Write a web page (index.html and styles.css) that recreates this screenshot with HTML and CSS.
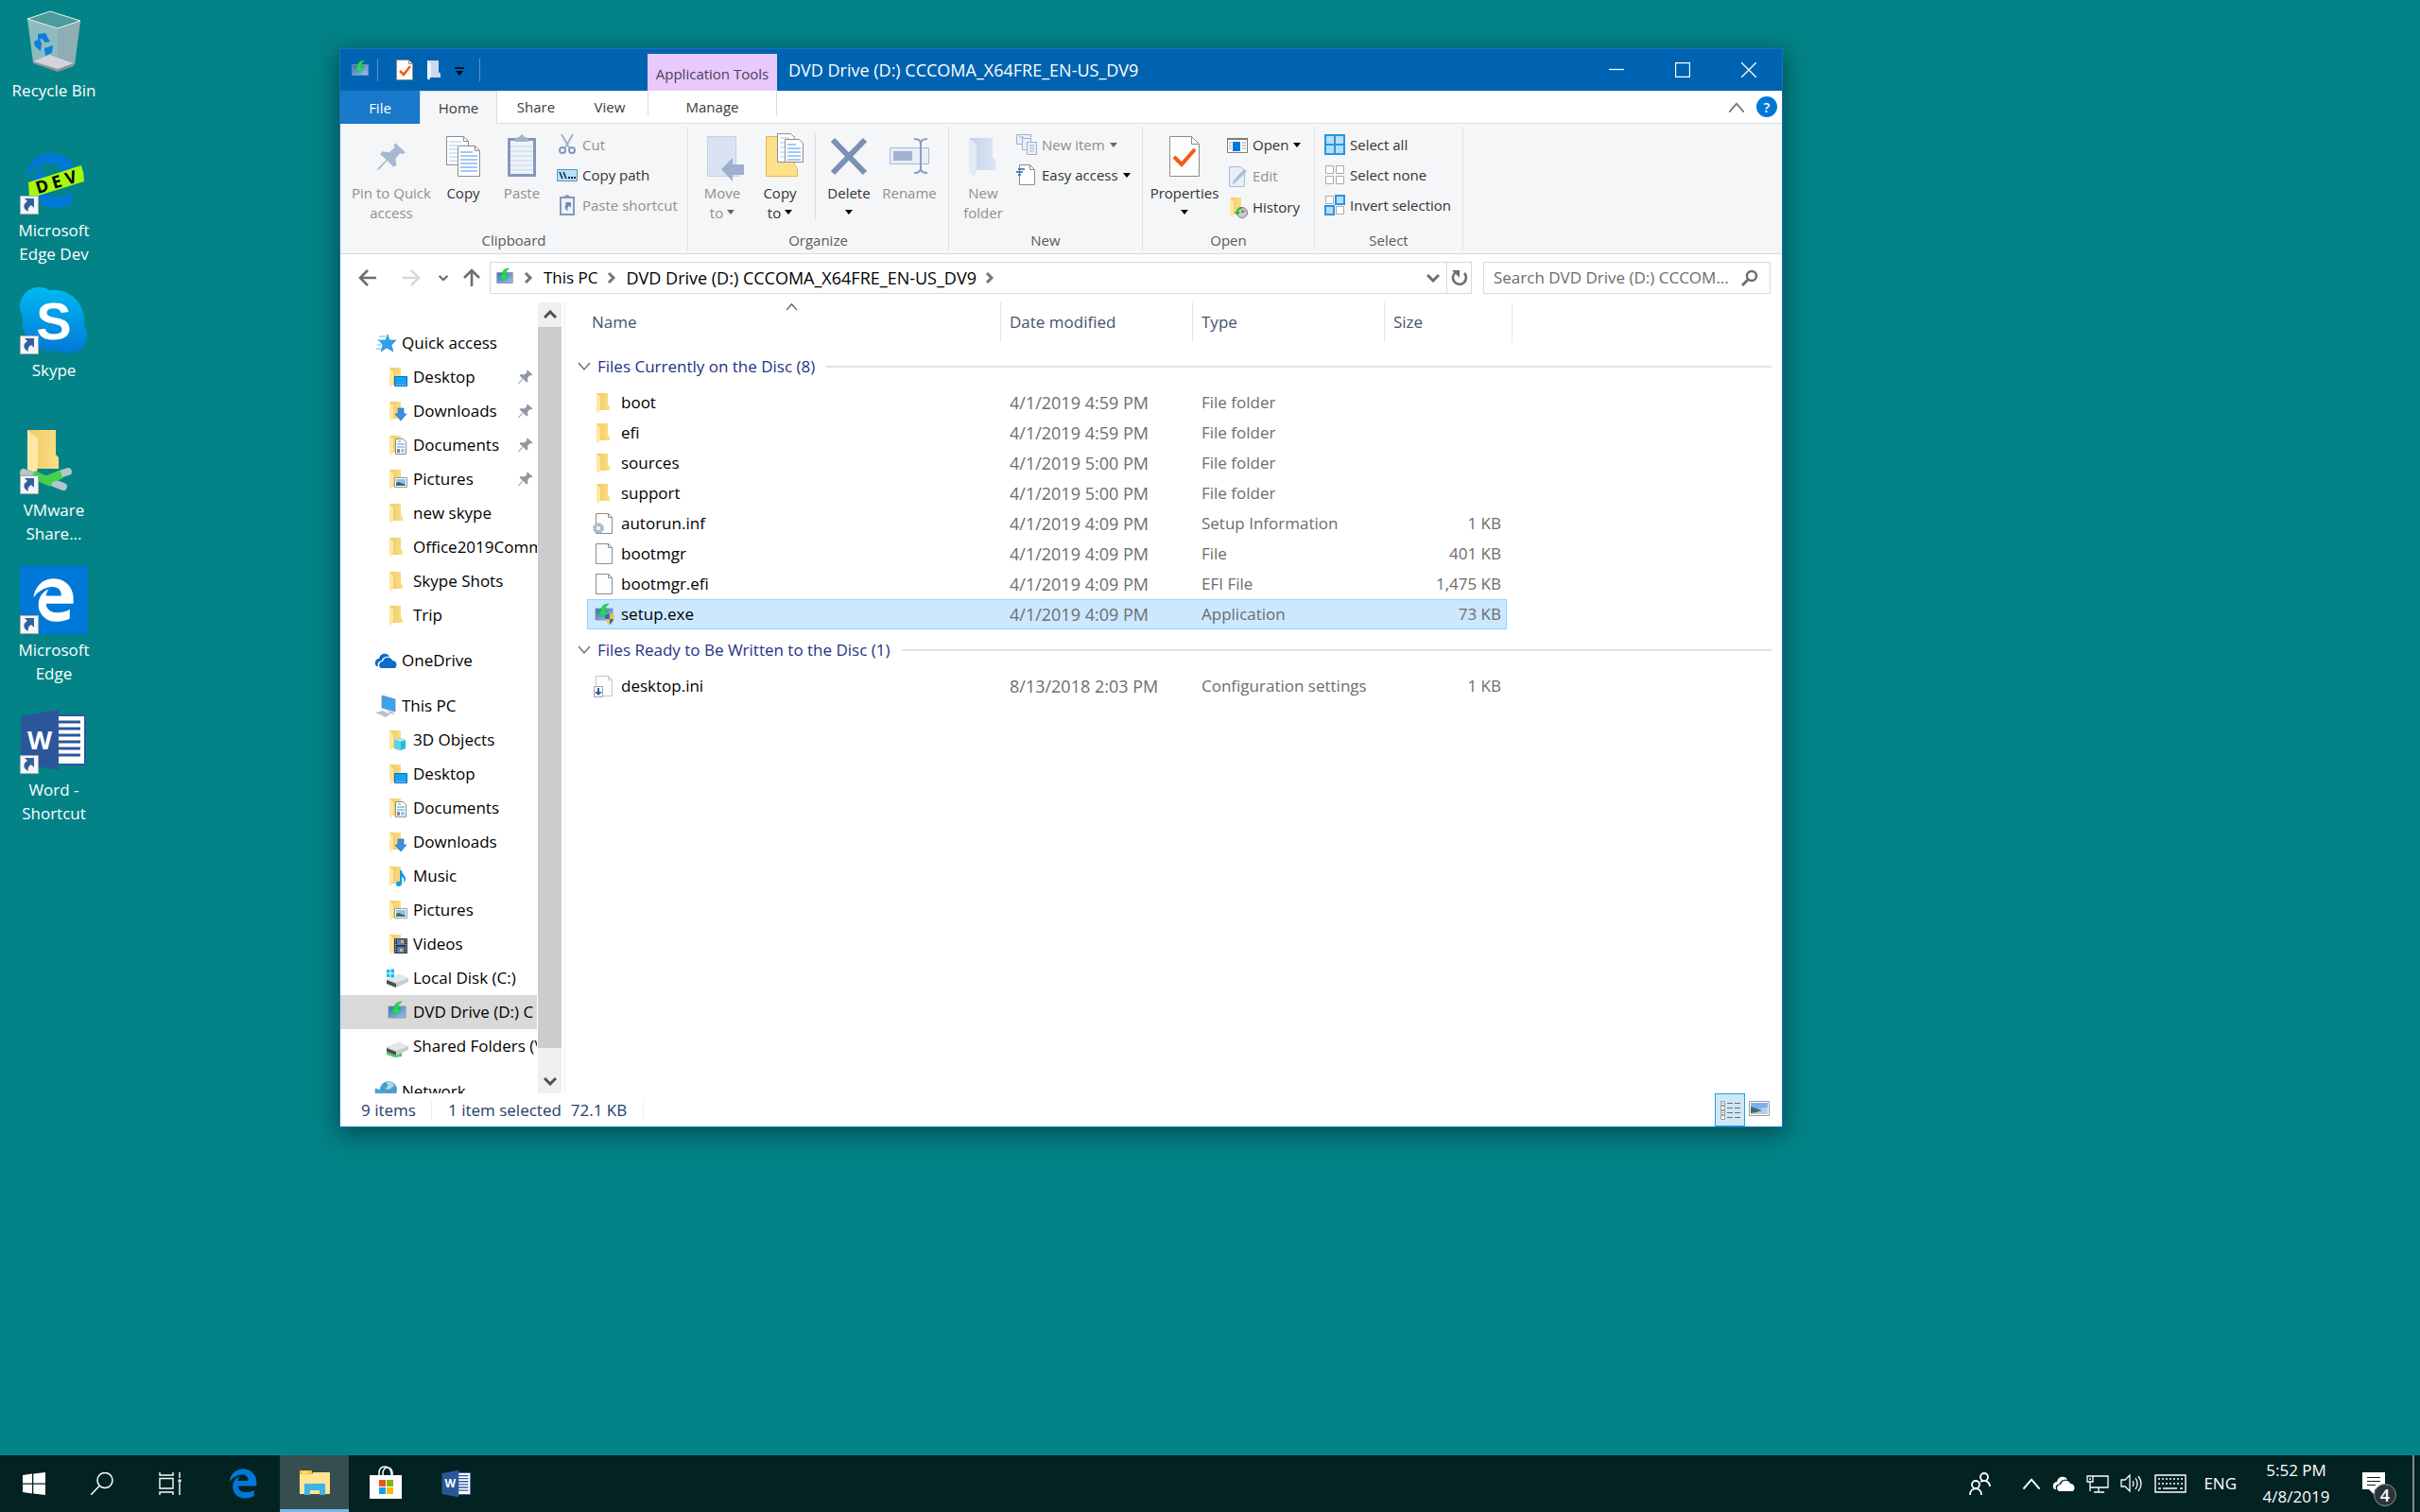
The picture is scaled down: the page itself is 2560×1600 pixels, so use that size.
FILE: index.html
```html
<!DOCTYPE html>
<html lang="en">
<head>
<meta charset="utf-8">
<meta name="viewport" content="width=device-width, initial-scale=1">
<title>DVD Drive (D:) CCCOMA_X64FRE_EN-US_DV9</title>
<link rel="stylesheet" href="styles.css">
</head>
<body>
<svg class="defs" width="0" height="0" aria-hidden="true">
  <defs>
    <linearGradient id="g-folder" x1="0" x2="1"><stop offset="0" stop-color="#eec767"/><stop offset="1" stop-color="#fddf85"/></linearGradient>
    <linearGradient id="g-skype" x1="0" y1="0" x2="0" y2="1"><stop offset="0" stop-color="#00b9f2"/><stop offset="1" stop-color="#0078d7"/></linearGradient>
    <linearGradient id="g-screen" x1="0" y1="0" x2="1" y2="1"><stop offset="0" stop-color="#3470b8"/><stop offset="1" stop-color="#9cc3ee"/></linearGradient>
    <linearGradient id="g-ghost" x1="0" x2="1"><stop offset="0" stop-color="#c3d2e9"/><stop offset="1" stop-color="#dce6f4"/></linearGradient>

    <symbol id="folder" viewBox="0 0 24 24"><path d="M4 2h12v12l2 2v4H7z" fill="url(#g-folder)"/><path d="M4 2l4 4v12l-2 5-2-2z" fill="#ffe8a3"/></symbol>
    <symbol id="shortcut" viewBox="0 0 20 20"><path d="M.5.5h19v19H.5z" fill="#f6f6f8" stroke="#a9adb1"/><path d="M5 3h10v10l-3-3c-3 2-4 4-3 7-6-3-6-8-1-11z" fill="#31619f"/></symbol>
    <symbol id="edge" viewBox="0 0 512 512"><path d="M486.286 243.671c0-44.032-7.754-84.465-28.801-122.405C416.498 47.879 343.912 8.001 258.893 8.001 118.962 7.724 40.617 113.214 26.056 227.679c42.429-61.312 117.073-121.376 220.375-124.966 0 0 109.666 0 99.419 104.957H169.997c6.369-37.386 18.554-58.986 34.339-78.926-75.048 34.893-121.85 96.096-120.742 188.315.83 71.448 50.124 144.836 120.743 171.976 83.357 31.847 192.776 7.2 240.132-21.324V363.307c-80.864 56.494-270.871 60.925-272.255-67.572h314.073v-52.064z" fill="currentColor"/></symbol>
    <symbol id="word" viewBox="0 0 72 66"><path d="M39 7h30v52H39z" fill="#fff" stroke="#2b579a" stroke-width="2"/><path d="M39 14h25M39 21h25M39 28h25M39 35h25M39 42h25M39 49h25" stroke="#2b579a" stroke-width="3"/><path d="M1 8l40-7v64L1 58z" fill="#2b579a"/><text x="21" y="43" text-anchor="middle" font-family="Open Sans, sans-serif" font-weight="700" font-size="27" fill="#fff">W</text></symbol>
    <symbol id="setup" viewBox="0 0 24 24"><path d="M3 6h18v12H3z" fill="url(#g-screen)" stroke="#8796a8"/><path d="M17 1c-5 0-8 2-8 8H6l5 6 5-6h-3c0-4 1-6 4-8z" fill="#1fe04d" stroke="#12a637" stroke-width=".5"/></symbol>
    <symbol id="pin" viewBox="0 0 32 32"><path d="M20 1l11 10-3 2-3-1-5 6 1 7-3 2-7-7-8 9-3 2 1-3 9-9-7-6 3-3 7 1 6-5-1-3z" fill="currentColor"/></symbol>
    <symbol id="page" viewBox="0 0 24 24"><path d="M3.500 1.500h13l4 4v17h-17z" fill="#fdfdfd" stroke="#8c8c8c"/><path d="M16.500 1.500v4h4" fill="none" stroke="#8c8c8c"/></symbol>
    <symbol id="f-desktop" viewBox="0 0 24 24"><use href="#folder"/><path d="M9.500 11.500h13v10h-13z" fill="#17a2f7" stroke="#0b72b8"/><path d="M11 20.500h10" stroke="#8ad4ff" stroke-dasharray="2 1"/></symbol>
    <symbol id="f-downloads" viewBox="0 0 24 24"><use href="#folder"/><path d="M13 9h6v6h3l-6 7-6-7h3z" fill="#3a92e0" stroke="#256fb4" stroke-width=".7"/></symbol>
    <symbol id="f-documents" viewBox="0 0 24 24"><use href="#folder"/><path d="M10.500 5.500h8l3 3v13h-11z" fill="#fff" stroke="#8a8a8a"/><path d="M13 8h3M12 11h8M12 14h8M16 17h4M16 19h4" stroke="#3f98cf"/><path d="M12 16h3v4h-3z" fill="#7a8794"/></symbol>
    <symbol id="f-pictures" viewBox="0 0 24 24"><use href="#folder"/><path d="M9.500 10.500h13v10h-13z" fill="#fff" stroke="#9a9a9a"/><path d="M11 12h10v7H11z" fill="#8cc3f2"/><path d="M11 16l3-1 7 3v1H11z" fill="#3f6b5c"/></symbol>
    <symbol id="f-3d" viewBox="0 0 24 24"><use href="#folder"/><path d="M9 12l7-2 5 2v9l-5 2-7-2z" fill="#2fb8d4"/><path d="M9 12l7-2 5 2-5 2z" fill="#a2ecf5"/><path d="M9 12l7 2v9l-7-2z" fill="#5ed3e6"/></symbol>
    <symbol id="f-music" viewBox="0 0 24 24"><use href="#folder"/><path d="M15 6h2c0 4 4 5 4 9 0 2-1 3-2 4 1-4 0-5-2-6v7c0 4-7 4-6 0 0-2 3-3 4-2z" fill="#149ce9"/></symbol>
    <symbol id="f-videos" viewBox="0 0 24 24"><use href="#folder"/><path d="M9 6h14v16H9z" fill="#3a3a3a"/><path d="M12 7h8v6h-8zM12 15h8v6h-8z" fill="#4a7fd4"/><path d="M16 8h3v3h-3zM15 17h3v3h-3z" fill="#f0b429"/><path d="M10.500 7v15M21.500 7v15" stroke="#e8e8e8" stroke-dasharray="1 1.500"/></symbol>
    <symbol id="disk" viewBox="0 0 24 24"><path d="M1 13l13-5 10 4v4l-13 6-10-4z" fill="#c9cbcd"/><path d="M1 13l13-5 10 4-13 5z" fill="#e4e6e8"/><path d="M1 14l10 4v4L1 18z" fill="#4b4f4e"/></symbol>
    <symbol id="d-local" viewBox="0 0 24 24"><use href="#disk"/><path d="M0 2h9v9H0z" fill="#fff"/><path d="M1 3h3.500v3.500H1zM5.500 2.500H9v4H5.500zM1 7.500h3.500V11H1zM5.500 7.500H9v4H5.500z" fill="#14bdf0"/></symbol>
    <symbol id="d-shared" viewBox="0 0 24 24"><use href="#disk"/><path d="M1 18l10 4 6-3v4l-7 1-9-3z" fill="#55c766"/></symbol>
    <symbol id="star" viewBox="0 0 24 24"><path d="M14 3l2 6h7l-5 5 2 7-7-4-6 4 2-7-4-5h7z" fill="#2ca1ee" stroke="#1d84cf" stroke-width=".6"/><path d="M5 5h7M3 9h4M3 14h4M2 18h5" stroke="#5cb8f2"/></symbol>
    <symbol id="cloud" viewBox="0 0 24 24"><path d="M2 18c-3-4 0-8 3-8 1-6 9-7 11-2-5-1-8 2-8 4-4 1-5 3-4 6z" fill="currentColor"/><path d="M7 20c-4-3-1-7 2-7 1-5 8-6 10-1 4-1 6 5 3 8z" fill="currentColor"/></symbol>
    <symbol id="pc" viewBox="0 0 24 24"><path d="M8 1l14 4v13L8 14z" fill="#36a5ee" stroke="#7b8a98" stroke-width=".8"/><path d="M13 17l6 1 3 3-6-1zM1 19l8-2 8 4-5 3z" fill="#b9c2ca"/></symbol>
    <symbol id="network" viewBox="0 0 24 24"><circle cx="15" cy="10" r="9" fill="#4f9cc8"/><path d="M12 3c4 1 2 5-1 6 4 2 8 0 10-4-2-4-7-5-9-2z" fill="#a9d8ea"/><path d="M1 9l12 3v12H1z" fill="#3aa8ec" stroke="#6d90a8" stroke-width=".6"/></symbol>
    <symbol id="file-inf" viewBox="0 0 24 24"><use href="#page"/><circle cx="6" cy="17" r="4" fill="#eef2f5" stroke="#9fb0bd" stroke-width="3.500" stroke-dasharray="2.500 .6"/></symbol>
    <symbol id="file-ini" viewBox="0 0 24 24"><g opacity=".5"><use href="#page"/></g><path d="M1.500 12.500h9v11h-9z" fill="#fff" stroke="#9aa3ab"/><path d="M5 14h2v4h3l-4 4-4-4h3z" fill="#2e5c9a"/></symbol>
    <symbol id="file-setup" viewBox="0 0 24 24"><use href="#setup"/><path d="M13 13l5-2 5 2c0 5-2 8-5 10-3-2-5-5-5-10z" fill="#f5c02c"/><path d="M18 11v6h-5c0-1 0-3 0-4zM18 17h4c-1 3-2 4-4 6z" fill="#2d6cc0"/></symbol>
    <symbol id="chev-right" viewBox="0 0 10 14"><path d="M2 2l5 5-5 5" fill="none" stroke="currentColor" stroke-width="3"/></symbol>
    <symbol id="chev-down" viewBox="0 0 14 10"><path d="M1 2l6 6 6-6" fill="none" stroke="currentColor" stroke-width="3"/></symbol>
    <symbol id="thin-down" viewBox="0 0 14 10"><path d="M1 1l6 7 6-7" fill="none" stroke="currentColor" stroke-width="1.400"/></symbol>
    <symbol id="thin-up" viewBox="0 0 14 10"><path d="M1 9l6-7 6 7" fill="none" stroke="currentColor" stroke-width="1.400"/></symbol>
    <symbol id="arrow-left" viewBox="0 0 20 20"><path d="M19 10H2M10 2l-8 8 8 8" fill="none" stroke="currentColor" stroke-width="2.600"/></symbol>
  </defs>
</svg>

<main class="desktop">
  <nav class="shortcuts" aria-label="Desktop shortcuts">
    <a class="shortcut" href="#"><span class="tile"><svg viewBox="0 0 72 72"><path d="M8 13l24-8 32 10-6 46-18 7-26-9z" fill="#b9d0d3" opacity=".75"/><path d="M8 13l24-8 32 10-24 8z" fill="#4f9a9b"/><path d="M40 23l24-8-7 47-17 5z" fill="#8fa9b0" opacity=".8"/><path d="M14 58l17-7 26 9-17 7z" fill="#d6d3d8"/><path d="M14 58l26 8 17-6v3l-17 6-26-9z" fill="#8d9498"/><path d="M8 13l24-8 32 10-24 8z" fill="none" stroke="#e4efef"/><path d="M19 29l8-1 5 9-5 1-4-4-4 1zM15 37l6-3 2 5-1 8-6-5zM26 44l9-3-1 8-7 3z" fill="#0e7fd8"/></svg></span><span class="caption">Recycle Bin</span></a>
    <a class="shortcut" href="#"><span class="tile"><svg viewBox="0 0 72 72"><svg x="3" y="2" width="60" height="68" color="#0078d7"><use href="#edge"/></svg><path d="M9 38l56-18q3 8 3 17l-58 18z" fill="#a6f80c"/><text x="39" y="44" transform="rotate(-17 39 40)" text-anchor="middle" font-family="Open Sans, sans-serif" font-weight="700" font-size="18" fill="#000">D E V</text></svg><svg class="overlay"><use href="#shortcut"/></svg></span><span class="caption">Microsoft<br>Edge Dev</span></a>
    <a class="shortcut" href="#"><span class="tile"><svg viewBox="0 0 72 72"><g fill="url(#g-skype)"><path d="M20 1c5 0 8 1 11 3 22-3 40 15 37 37 8 13-1 30-16 30-4 0-8-1-11-3C17 71 0 54 3 32-5 19 4 1 20 1z"/></g><text x="36" y="56" text-anchor="middle" font-family="Liberation Sans, sans-serif" font-weight="700" font-size="56" fill="#fff">S</text></svg><svg class="overlay"><use href="#shortcut"/></svg></span><span class="caption">Skype</span></a>
    <a class="shortcut" href="#"><span class="tile"><svg viewBox="0 0 72 72"><path d="M8 4h30v26l3 3v12H12z" fill="url(#g-folder)"/><path d="M8 4l11 9v25l-1 12-10-4z" fill="#ffe8a3"/><path d="M4 49l10 4M36 60l10 4M42 51l9-3" stroke="#b4c6c6" stroke-width="8" stroke-linecap="round"/><path d="M14 51l20 9M28 57l16-6" stroke="#45d04a" stroke-width="9"/></svg><svg class="overlay"><use href="#shortcut"/></svg></span><span class="caption">VMware<br>Share...</span></a>
    <a class="shortcut" href="#"><span class="tile"><svg viewBox="0 0 72 72"><path d="M0 0h72v72H0z" fill="#0078d7"/><svg x="12" y="12" width="47" height="48" color="#fff"><use href="#edge"/></svg></svg><svg class="overlay"><use href="#shortcut"/></svg></span><span class="caption">Microsoft<br>Edge</span></a>
    <a class="shortcut" href="#"><span class="tile"><svg viewBox="0 0 72 72"><svg y="3" width="72" height="66"><use href="#word"/></svg></svg><svg class="overlay"><use href="#shortcut"/></svg></span><span class="caption">Word -<br>Shortcut</span></a>
  </nav>

  <section class="window" aria-label="File Explorer">
    <header class="titlebar">
      <div class="quick">
        <svg class="i22"><use href="#setup"/></svg><i class="vsep"></i>
        <button aria-label="Properties"><svg class="i24" viewBox="0 0 24 24"><use href="#page"/><path d="M7 13l4 4 7-9" fill="none" stroke="#f25c12" stroke-width="2.500"/></svg></button>
        <button aria-label="New folder"><svg class="i24" viewBox="0 0 24 24"><path d="M4 2h12v12l2 2v4H7z" fill="#c9d9f0"/><path d="M4 2l4 4v12l-2 5-2-2z" fill="#eef4fc"/></svg></button>
        <button aria-label="Customize"><svg class="i10" viewBox="0 0 10 10"><path d="M0 1h10" stroke="#000" stroke-width="1.500"/><path d="M1 4h8L5 9z"/></svg></button>
        <i class="vsep"></i>
      </div>
      <div class="context-title">Application Tools</div>
      <h1>DVD Drive (D:) CCCOMA_X64FRE_EN-US_DV9</h1>
      <div class="controls">
        <button aria-label="Minimize"><svg class="i16" viewBox="0 0 16 16"><path d="M0 7.500h16"/></svg></button>
        <button aria-label="Maximize"><svg class="i16" viewBox="0 0 16 16"><path d="M.5.5h15v15H.5z"/></svg></button>
        <button aria-label="Close"><svg class="i16" viewBox="0 0 16 16"><path d="M0 0l16 16M16 0L0 16"/></svg></button>
      </div>
    </header>

    <div class="tabs">
      <button class="tab file">File</button><button class="tab home">Home</button><button class="tab">Share</button><button class="tab view">View</button><button class="tab manage">Manage</button>
      <span class="grow"></span>
      <button class="collapse" aria-label="Collapse ribbon"><svg viewBox="0 0 14 10"><use href="#thin-up"/></svg></button>
      <button class="help" aria-label="Help">?</button>
    </div>

    <div class="ribbon">
      <section class="group g-clipboard">
        <div class="tools">
          <button class="big w96" disabled><svg viewBox="0 0 44 48" color="#a9b8d2"><svg x="7" y="8" width="31" height="34"><use href="#pin"/></svg></svg><span>Pin to Quick<br>access</span></button>
          <button class="big w56"><svg viewBox="0 0 44 48"><g fill="#fff" stroke="#8c8c8c"><path d="M4.500 3.500h18l5 5v25h-23z"/><path d="M16.500 13.500h18l5 5v27h-23z"/></g><path d="M22.500 3.500v5h5M34.500 13.500v5h5" fill="none" stroke="#8c8c8c"/><path d="M7 9h13M7 13h17M7 17h9M7 21h9M7 25h9M7 29h9" stroke="#a8c6ee"/><path d="M19 20h13M19 24h18M19 28h18M19 32h18M19 36h18M19 40h18" stroke="#4a93ea"/></svg><span>Copy</span></button>
          <button class="big w68" disabled><svg viewBox="0 0 44 48"><path d="M8.500 6.500h27v38h-27z" fill="#eef3fb" stroke="#8598ba" stroke-width="3"/><path d="M10 14h24M10 19h24M10 24h24M10 29h24M10 34h24M10 39h24" stroke="#c9d5ea"/><path d="M15 9V5l4-1 3-3 3 3 4 1v4z" fill="#a3b2cd"/></svg><span>Paste</span></button>
          <div class="stack">
            <button disabled><svg class="i22" viewBox="0 0 22 22"><path d="M5 0l8 14M17 0L9 14" stroke="#a3b2cd" stroke-width="2"/><circle cx="6" cy="17" r="3" fill="none" stroke="#8598ba" stroke-width="2"/><circle cx="16" cy="17" r="3" fill="none" stroke="#8598ba" stroke-width="2"/></svg>Cut</button>
            <button><svg class="i22" viewBox="0 0 22 22"><path d="M.5 5.500h21v12H.5z" fill="#b5e0fb" stroke="#5b93ba"/><path d="M3 8l3 7M7 8l3 7" stroke="#123" stroke-width="1.500"/><path d="M12 14h8" stroke="#123" stroke-width="2" stroke-dasharray="2 1"/></svg>Copy path</button>
            <button disabled><svg class="i22" viewBox="0 0 22 22"><path d="M4 3h14v18H4z" fill="#eef3fb" stroke="#8598ba" stroke-width="2"/><path d="M7 4V2l4-2 4 2v2z" fill="#8598ba"/><path d="M9 8h6v6l-2-2c-2 1-2 3-1 5-4-1-4-5-2-7z" fill="#7388ae"/></svg>Paste shortcut</button>
          </div>
        </div>
        <h2>Clipboard</h2>
      </section>
      <section class="group g-organize">
        <div class="tools">
          <button class="big w66" disabled><svg viewBox="0 0 44 48"><path d="M6.500 3.500h30v30l3 4v8h-33z" fill="#d9e3f3" stroke="#c3d0e6"/><path d="M21 38l12-12v7h12v11H33v7z" fill="#9fb0cc"/></svg><span>Move<br>to <i class="caret"></i></span></button>
          <button class="big w56"><svg viewBox="-7 0 44 48"><path d="M.5 3.500h30v30l3 4v8H.5z" fill="#fce08a" stroke="#e3b94c"/><g fill="#fff" stroke="#8c8c8c"><path d="M12.500.5h14l4 4v26h-18z"/><path d="M20.500 6.500h15l4 4v20h-19z"/></g><path d="M15 5h10M15 10h5M15 15h5M15 20h5M15 25h5" stroke="#a8c6ee"/><path d="M23 12h9M23 16h14M23 20h14M23 24h14M23 28h14" stroke="#4a93ea"/></svg><span>Copy<br>to <i class="caret"></i></span></button>
          <i class="rsep"></i>
          <button class="big w60"><svg viewBox="0 0 44 48"><path d="M5 7l34 35M39 7L5 42" stroke="#7c8fb4" stroke-width="6"/></svg><span>Delete<br><i class="caret"></i></span></button>
          <button class="big w68" disabled><svg viewBox="0 0 44 48"><path d="M1.500 15.500h41v17h-41z" fill="#e6eefa" stroke="#a9bad6"/><path d="M5 19h20v10H5z" fill="#a3b2cd"/><path d="M27 6q7 0 7 5v26q0 5-7 5M41 6q-7 0-7 5v26q0 5 7 5" fill="none" stroke="#8a9cbd" stroke-width="2"/></svg><span>Rename</span></button>
        </div>
        <h2>Organize</h2>
      </section>
      <section class="group g-new">
        <div class="tools">
          <button class="big w64" disabled><svg viewBox="0 0 44 48"><path d="M7 5h25v20l3 3v11H12z" fill="url(#g-ghost)"/><path d="M7 5l8 7v25l-2 9-6-5z" fill="#e3ebf7"/></svg><span>New<br>folder</span></button>
          <div class="stack">
            <button disabled><svg class="i22" viewBox="0 0 22 22"><g fill="#eaf0fa" stroke="#9fb0cc"><path d="M.5.5h15v10H.5z"/><path d="M6.500 4.500h9v12h-9z"/><path d="M11.500 8.500h10v13h-10z"/></g><path d="M14 12h5M14 15h5M14 18h5M3 3h5" stroke="#9fb0cc"/></svg>New item <i class="caret"></i></button>
            <button><svg class="i22" viewBox="0 0 22 22"><path d="M3.500.5h11l5 5v16h-16z" fill="#fff" stroke="#8c8c8c"/><path d="M14.500.5v5h5" fill="none" stroke="#8c8c8c"/><path d="M2 5h7M0 8h7M2 11h3" stroke="#1467b0" stroke-width="1.500"/></svg>Easy access <i class="caret"></i></button>
          </div>
        </div>
        <h2>New</h2>
      </section>
      <section class="group g-open">
        <div class="tools">
          <button class="big w84"><svg viewBox="0 0 44 48"><path d="M6.500 3.500h23l8 8v34h-31z" fill="#fdfdfd" stroke="#8c8c8c"/><path d="M29.500 3.500v8h8" fill="none" stroke="#8c8c8c"/><path d="M11 25l8 8 14-16" fill="none" stroke="#f25c12" stroke-width="4"/></svg><span>Properties<br><i class="caret"></i></span></button>
          <div class="stack tall">
            <button><svg class="i22" viewBox="0 0 22 22"><path d="M.5 3.500h21v15H.5z" fill="#fff" stroke="#7b7b7b"/><path d="M0 4h22" stroke="#7b7b7b" stroke-width="2"/><path d="M6 7h8v10H6z" fill="#0078d7"/><path d="M2 8h3M2 11h3M2 14h3M16 8h4M16 11h4M16 14h4" stroke="#999"/></svg>Open <i class="caret"></i></button>
            <button disabled><svg class="i22" viewBox="0 0 22 22"><path d="M2.500.5h12l4 4v17h-16z" fill="#e6eefa" stroke="#a9bad6"/><path d="M21 5L9 17l-3 2 1-4L18 3z" fill="#a9bad6"/></svg>Edit</button>
            <button><svg class="i22" viewBox="0 0 22 22"><path d="M3 0h12v18H6z" fill="url(#g-folder)"/><path d="M3 0l4 4v14l-1 3-3-2z" fill="#ffe8a3"/><circle cx="16" cy="16" r="5.500" fill="#c9cccc" stroke="#7c8080"/><path d="M16 16l3-2M16 16v-3" stroke="#555"/><path d="M16 10c-4 0-6 2-6 5H8l3 4 3-4h-2c0-2 2-3 4-3z" fill="#2cb33a"/></svg>History</button>
          </div>
        </div>
        <h2>Open</h2>
      </section>
      <section class="group g-select">
        <div class="tools">
          <div class="stack">
            <button><svg class="i22" viewBox="0 0 22 22"><path d="M1 1h20v20H1zM11 1v20M1 11h20" fill="#b5defa" stroke="#2b94e0" stroke-width="2"/></svg>Select all</button>
            <button><svg class="i22" viewBox="0 0 22 22"><path d="M1.500 1.500h8v8h-8zM12.500 1.500h8v8h-8zM1.500 12.500h8v8h-8zM12.500 12.500h8v8h-8z" fill="#fff" stroke="#ababab"/></svg>Select none</button>
            <button><svg class="i22" viewBox="0 0 22 22"><path d="M1.500 1.500h8v8h-8zM12.500 12.500h8v8h-8z" fill="#fff" stroke="#ababab"/><path d="M12 1h9v9h-9zM1 12h9v9H1z" fill="#b5defa" stroke="#2b94e0" stroke-width="2"/></svg>Invert selection</button>
          </div>
        </div>
        <h2>Select</h2>
      </section>
    </div>

    <div class="navbar">
      <button class="nav" aria-label="Back"><svg class="i20"><use href="#arrow-left"/></svg></button>
      <button class="nav fwd" aria-label="Forward"><svg class="i20" viewBox="0 0 20 20"><g transform="rotate(180 10 10)"><use href="#arrow-left"/></g></svg></button>
      <button class="nav recent" aria-label="Recent locations"><svg class="i10" viewBox="0 0 14 10"><use href="#chev-down"/></svg></button>
      <button class="nav up" aria-label="Up"><svg class="i20" viewBox="0 0 20 20"><g transform="rotate(90 10 10)"><use href="#arrow-left"/></g></svg></button>
      <div class="address">
        <svg class="i22"><use href="#setup"/></svg>
        <svg class="crumb"><use href="#chev-right"/></svg><a href="#">This PC</a>
        <svg class="crumb"><use href="#chev-right"/></svg><a href="#">DVD Drive (D:) CCCOMA_X64FRE_EN-US_DV9</a>
        <svg class="crumb"><use href="#chev-right"/></svg>
        <span class="grow"></span>
        <button class="drop" aria-label="Previous locations"><svg class="i14" viewBox="0 0 14 10"><use href="#chev-down"/></svg></button>
        <button class="refresh" aria-label="Refresh"><svg class="i18" viewBox="0 0 18 18"><path d="M14 4a7 7 0 1 1-9-1" fill="none" stroke="#6e6e6e" stroke-width="2.600"/><path d="M1 1h8v8z" fill="#6e6e6e"/></svg></button>
      </div>
      <label class="search"><input type="text" aria-label="Search" placeholder="Search DVD Drive (D:) CCCOM..."><svg class="i18" viewBox="0 0 18 18"><circle cx="11" cy="7" r="5" fill="none" stroke="#6e6e6e" stroke-width="2.500"/><path d="M8 10l-7 7" stroke="#6e6e6e" stroke-width="3"/></svg></label>
    </div>

    <div class="content">
      <nav class="tree" aria-label="Folders">
        <ul>
          <li><a href="#"><svg class="i24"><use href="#star"/></svg><span>Quick access</span></a>
            <ul>
              <li><a href="#"><svg class="i24"><use href="#f-desktop"/></svg><span>Desktop</span><svg class="pinned"><use href="#pin"/></svg></a></li>
              <li><a href="#"><svg class="i24"><use href="#f-downloads"/></svg><span>Downloads</span><svg class="pinned"><use href="#pin"/></svg></a></li>
              <li><a href="#"><svg class="i24"><use href="#f-documents"/></svg><span>Documents</span><svg class="pinned"><use href="#pin"/></svg></a></li>
              <li><a href="#"><svg class="i24"><use href="#f-pictures"/></svg><span>Pictures</span><svg class="pinned"><use href="#pin"/></svg></a></li>
              <li><a href="#"><svg class="i24"><use href="#folder"/></svg><span>new skype</span></a></li>
              <li><a href="#"><svg class="i24"><use href="#folder"/></svg><span>Office2019Comm</span></a></li>
              <li><a href="#"><svg class="i24"><use href="#folder"/></svg><span>Skype Shots</span></a></li>
              <li><a href="#"><svg class="i24"><use href="#folder"/></svg><span>Trip</span></a></li>
            </ul></li>
          <li><a href="#"><svg class="i24 onedrive"><use href="#cloud"/></svg><span>OneDrive</span></a></li>
          <li><a href="#"><svg class="i24"><use href="#pc"/></svg><span>This PC</span></a>
            <ul>
              <li><a href="#"><svg class="i24"><use href="#f-3d"/></svg><span>3D Objects</span></a></li>
              <li><a href="#"><svg class="i24"><use href="#f-desktop"/></svg><span>Desktop</span></a></li>
              <li><a href="#"><svg class="i24"><use href="#f-documents"/></svg><span>Documents</span></a></li>
              <li><a href="#"><svg class="i24"><use href="#f-downloads"/></svg><span>Downloads</span></a></li>
              <li><a href="#"><svg class="i24"><use href="#f-music"/></svg><span>Music</span></a></li>
              <li><a href="#"><svg class="i24"><use href="#f-pictures"/></svg><span>Pictures</span></a></li>
              <li><a href="#"><svg class="i24"><use href="#f-videos"/></svg><span>Videos</span></a></li>
              <li><a href="#"><svg class="i24"><use href="#d-local"/></svg><span>Local Disk (C:)</span></a></li>
              <li><a class="current" href="#"><svg class="i24"><use href="#setup"/></svg><span>DVD Drive (D:) C</span></a></li>
              <li><a href="#"><svg class="i24"><use href="#d-shared"/></svg><span>Shared Folders (\</span></a></li>
            </ul></li>
          <li><a href="#"><svg class="i24"><use href="#network"/></svg><span>Network</span></a></li>
        </ul>
      </nav>
      <div class="scrollbar">
        <button aria-label="Scroll up"><svg class="i14" viewBox="0 0 14 10"><g transform="rotate(180 7 5)"><use href="#chev-down"/></g></svg></button>
        <div class="thumb"></div>
        <div class="rest"></div>
        <button aria-label="Scroll down"><svg class="i14" viewBox="0 0 14 10"><use href="#chev-down"/></svg></button>
      </div>
      <div class="files">
        <table>
          <colgroup><col class="c-pad"><col class="c-name"><col class="c-date"><col class="c-type"><col class="c-size"><col class="c-gap"><col></colgroup>
          <thead>
            <tr><td></td><th><button class="sorted">Name<svg viewBox="0 0 14 10"><use href="#thin-up"/></svg></button></th><th><button>Date modified</button></th><th><button>Type</button></th><th colspan="2"><button>Size</button></th><td></td></tr>
          </thead>
          <tbody>
            <tr class="section"><th colspan="7"><div><button><svg viewBox="0 0 14 10"><use href="#thin-down"/></svg>Files Currently on the Disc (8)</button><i></i></div></th></tr>
            <tr><td></td><td><svg class="i24"><use href="#folder"/></svg>boot</td><td>4/1/2019 4:59 PM</td><td>File folder</td><td></td></tr>
            <tr><td></td><td><svg class="i24"><use href="#folder"/></svg>efi</td><td>4/1/2019 4:59 PM</td><td>File folder</td><td></td></tr>
            <tr><td></td><td><svg class="i24"><use href="#folder"/></svg>sources</td><td>4/1/2019 5:00 PM</td><td>File folder</td><td></td></tr>
            <tr><td></td><td><svg class="i24"><use href="#folder"/></svg>support</td><td>4/1/2019 5:00 PM</td><td>File folder</td><td></td></tr>
            <tr><td></td><td><svg class="i24"><use href="#file-inf"/></svg>autorun.inf</td><td>4/1/2019 4:09 PM</td><td>Setup Information</td><td>1 KB</td></tr>
            <tr><td></td><td><svg class="i24"><use href="#page"/></svg>bootmgr</td><td>4/1/2019 4:09 PM</td><td>File</td><td>401 KB</td></tr>
            <tr><td></td><td><svg class="i24"><use href="#page"/></svg>bootmgr.efi</td><td>4/1/2019 4:09 PM</td><td>EFI File</td><td>1,475 KB</td></tr>
            <tr class="selected"><td></td><td><svg class="i24"><use href="#file-setup"/></svg>setup.exe</td><td>4/1/2019 4:09 PM</td><td>Application</td><td>73 KB</td></tr>
          </tbody>
          <tbody>
            <tr class="section"><th colspan="7"><div><button><svg viewBox="0 0 14 10"><use href="#thin-down"/></svg>Files Ready to Be Written to the Disc (1)</button><i></i></div></th></tr>
            <tr><td></td><td><svg class="i24"><use href="#file-ini"/></svg>desktop.ini</td><td>8/13/2018 2:03 PM</td><td>Configuration settings</td><td>1 KB</td></tr>
          </tbody>
        </table>
      </div>
    </div>

    <footer class="status">
      <span class="count">9 items</span>
      <span class="chosen">1 item selected</span><span class="weight">72.1 KB</span>
      <span class="grow"></span>
      <button class="mode on" aria-label="Details view"><svg viewBox="0 0 22 22"><path d="M1.500 1.500h4v4h-4zM1.500 6.500h4v4h-4zM1.500 11.500h4v4h-4zM1.500 16.500h4v4h-4z" fill="#fff" stroke="#9a9a9a"/><path d="M8 3.500h6M16 3.500h6M8 8.500h6M16 8.500h6M8 13.500h6M16 13.500h6M8 18.500h6M16 18.500h6" stroke="#6e6e6e"/><path d="M3 3h1v1H3z" fill="#1467b0"/><path d="M3 13h1v1H3z" fill="#c00"/></svg></button>
      <button class="mode" aria-label="Large icons view"><svg viewBox="0 0 22 22"><path d="M.5 1.500h21v15H.5z" fill="#fff" stroke="#9a9a9a"/><path d="M2 3h18v12H2z" fill="#7db0f3"/><path d="M2 10l9-1 9-1v7H2z" fill="#b4cfe4"/><path d="M2 7l6 2 6 2-6 2-6 1z" fill="#43705f"/></svg></button>
    </footer>
  </section>
</main>

<footer class="taskbar">
  <button class="task" aria-label="Start"><svg class="i24" viewBox="0 0 24 24"><path d="M0 3l10-1.400V11.500H0zM11.300 1.400L24 0v11.500H11.300zM0 12.700h10v9.800L0 21zM11.300 12.700H24V24l-12.700-1.600z" fill="#fff"/></svg></button>
  <button class="task" aria-label="Search"><svg class="i24" viewBox="0 0 24 24" fill="none" stroke="#fff" stroke-width="1.500"><circle cx="15" cy="8.500" r="8"/><path d="M9 14.500L0 24"/></svg></button>
  <button class="task" aria-label="Task view"><svg class="i24" viewBox="0 0 24 24" fill="none" stroke="#fff" stroke-width="1.400"><path d="M1 0v3h14V0M1 24v-3h14v3M1 6.500h14v10.500H1zM22 0v6M22 11v13"/><path d="M20.500 7.500h3v3h-3z" fill="#fff" stroke="none"/></svg></button>
  <button class="task app edge" aria-label="Microsoft Edge"><svg viewBox="0 0 32 32"><use href="#edge"/></svg></button>
  <button class="task app active" aria-label="File Explorer"><svg viewBox="0 0 32 32"><path d="M0 3h13v4H0z" fill="#ffc42e"/><path d="M0 7h13l1-2h18v23H0z" fill="#ffe594"/><path d="M5 17h22v12h-6v-5H11v5H5z" fill="#3bb4e8"/><path d="M3 5h5" stroke="#fff"/></svg></button>
  <button class="task app store" aria-label="Microsoft Store"><svg viewBox="0 0 36 36"><path d="M11 12V9q0-7 6-7t7 7v3M15 12V8q1-5 5-5t5 5v4" fill="none" stroke="#fff" stroke-width="1.500"/><path d="M1 11h34v25H1z" fill="#fff"/><path d="M11 16h7v7h-7z" fill="#f25022"/><path d="M19 16h7v7h-7z" fill="#7fba00"/><path d="M11 24h7v7h-7z" fill="#00a4ef"/><path d="M19 24h7v7h-7z" fill="#ffb900"/></svg></button>
  <button class="task app" aria-label="Word"><svg viewBox="0 0 32 32"><use href="#word"/></svg></button>
  <span class="grow"></span>
  <div class="tray">
    <button class="people" aria-label="People"><svg class="i24" viewBox="0 0 24 24" fill="none" stroke="#fff" stroke-width="1.800"><circle cx="16" cy="5" r="4"/><circle cx="7" cy="13" r="4"/><path d="M1 24c0-9 12-9 12 0M12 10c6-3 10 1 10 5"/></svg></button>
    <button aria-label="Show hidden icons"><svg class="i20" viewBox="0 0 14 10"><use href="#thin-up"/></svg></button>
    <button aria-label="OneDrive"><svg class="i24"><use href="#cloud"/></svg></button>
    <button aria-label="Network"><svg class="i24" viewBox="0 0 24 24" fill="none" stroke="#fff" stroke-width="1.300"><path d="M7 4h16v12H4V11M1 4h6v6H1zM4 10v10M13 16v5M8 21h11M3 7h2"/></svg></button>
    <button aria-label="Volume"><svg class="i24" viewBox="0 0 24 24" fill="none" stroke="#fff" stroke-width="1.300"><path d="M1 8h4l5-5v17l-5-5H1zM13 9q2 3 0 6M16 6q4 6 0 12M19 4q6 8 0 16"/></svg></button>
    <button class="keys" aria-label="Touch keyboard"><svg viewBox="0 0 34 20" fill="none" stroke="#fff" stroke-width="1.400"><path d="M1 1h32v18H1z"/><path d="M4 5h26M4 10h26" stroke-dasharray="2 2"/><path d="M4 15h3M9 15h15M27 15h3"/></svg></button>
    <button class="lang">ENG</button>
    <button class="clock"><time>5:52 PM</time><br>4/8/2019</button>
    <button class="notice" aria-label="Notifications"><svg class="i24" viewBox="0 0 24 24"><path d="M0 0h24v18H13v6l-6-6H0z" fill="#fff"/><path d="M5 5.500h14M5 9.500h14M5 13.500h9" stroke="#032222"/></svg><span class="badge">4</span></button>
  </div>
</footer>
</body>
</html>
```
FILE: styles.css
```css
* { box-sizing: border-box; }

body {
  margin: 0;
  min-height: 100vh;
  display: flex;
  flex-direction: column;
  background: #038387;
  color: #000;
  font: 17px/24px "Open Sans", "Noto Sans", sans-serif;
}

button {
  margin: 0;
  padding: 0;
  border: 0;
  background: none;
  color: inherit;
  font: inherit;
}

a { color: inherit; text-decoration: none; }
ul { list-style: none; margin: 0; padding: 0; }
h1, h2 { margin: 0; font-weight: 400; }
svg { flex: none; display: block; }

.defs { position: absolute; }
.grow { flex: 1; }
.i10 { width: 10px; height: 10px; }
.i14 { width: 14px; height: 14px; }
.i16 { width: 16px; height: 16px; }
.i18 { width: 18px; height: 18px; }
.i20 { width: 20px; height: 20px; }
.i22 { width: 22px; height: 22px; }
.i24 { width: 24px; height: 24px; }

/* Desktop */
.desktop { flex: 1; position: relative; }
.shortcuts { width: 114px; padding-top: 7px; }
.shortcut {
  height: 148px;
  display: flex;
  flex-direction: column;
  align-items: center;
  gap: 4px;
  color: #fff;
  text-align: center;
  line-height: 25px;
}
.tile { position: relative; width: 72px; height: 72px; }
.tile > svg { width: 72px; height: 72px; }
.tile > .overlay { position: absolute; left: 0; bottom: 0; width: 20px; height: 20px; }

/* Explorer window */
.window {
  position: absolute;
  left: 359px;
  top: 51px;
  width: 1527px;
  height: 1142px;
  display: flex;
  flex-direction: column;
  background: #fff;
  border: 1px solid #1a6fc0;
  box-shadow: 0 6px 24px 2px rgba(0, 0, 0, .4);
}

.titlebar {
  height: 44px;
  display: flex;
  align-items: center;
  background: #0063b1;
  color: #fff;
}
.quick {
  width: 325px;
  padding-left: 10px;
  display: flex;
  align-items: center;
}
.vsep { width: 1px; height: 24px; margin: 0 16px 0 7px; background: #5d92c9; }
.quick button { margin-right: 8px; }
.quick button + button + button { margin: 4px 9px 0 1px; }
.context-title {
  width: 137px;
  height: 39px;
  align-self: flex-end;
  padding-top: 9px;
  background: #e9c9fc;
  color: #4a3f5c;
  font-size: 15px;
  text-align: center;
}
.titlebar h1 { flex: 1; padding-left: 12px; font-size: 18px; }
.controls { display: flex; align-self: stretch; }
.controls button { width: 70px; display: flex; align-items: center; justify-content: center; }
.controls path { fill: none; stroke: #fff; stroke-width: 1.3; }

.tabs {
  height: 35px;
  display: flex;
  align-items: stretch;
  border-bottom: 1px solid #dadbdc;
  color: #3b3b3b;
  font-size: 15px;
}
.tab { width: 82px; }
.file { width: 84px; margin-bottom: -1px; background: #1979ca; color: #fff; }
.home { margin-bottom: -1px; background: #f5f6f7; border: 1px solid #dadbdc; border-bottom: 0; }
.view { width: 74px; }
.manage { width: 137px; margin: 0 0 8px 3px; padding-top: 5px; border: solid #dadbdc; border-width: 0 1px; }
.collapse { width: 30px; color: #777; }
.collapse svg { width: 18px; height: 13px; margin: auto; }
.help {
  width: 22px;
  height: 22px;
  margin: 6px 5px 0 6px;
  border-radius: 50%;
  background: #0078d7;
  color: #fff;
  font-weight: 600;
  line-height: 22px;
}

/* Ribbon */
.ribbon {
  height: 138px;
  display: flex;
  padding: 3px 0;
  background: #f5f6f7;
  border-bottom: 1px solid #dadbdc;
  color: #333;
  font-size: 15px;
  line-height: 21px;
}
.group {
  display: flex;
  flex-direction: column;
  justify-content: space-between;
  border-right: 1px solid #e0e1e2;
}
.group h2 { color: #5a5a5a; font-size: 15px; text-align: center; }
.tools { display: flex; align-items: flex-start; white-space: nowrap; }
.ribbon button:disabled { color: #8f8f8f; }
.g-clipboard { width: 368px; }
.g-clipboard .tools { padding-left: 6px; }
.g-organize { width: 276px; }
.g-organize .tools { padding-left: 3px; }
.g-new { width: 205px; }
.g-new .tools { padding-left: 4px; }
.g-open { width: 182px; }
.g-open .tools { padding-left: 2px; }
.g-select { width: 157px; }
.g-select .tools { padding-left: 7px; }
.big {
  display: flex;
  flex-direction: column;
  align-items: center;
  gap: 5px;
  padding-top: 7px;
}
.big > svg { width: 44px; height: 48px; overflow: visible; }
.w56 { width: 56px; }
.w60 { width: 60px; }
.w64 { width: 64px; }
.w66 { width: 66px; }
.w68 { width: 68px; }
.w84 { width: 84px; }
.w96 { width: 96px; }
.rsep { width: 1px; height: 91px; margin: 7px 5px 0 9px; background: #dcdddd; }
.caret {
  display: inline-block;
  vertical-align: 4px;
  border: 4px solid transparent;
  border-top: 5px solid #000;
  border-bottom: 0;
}
button:disabled .caret { border-top-color: #666; }
.stack { padding: 3px 0 0 3px; }
.stack button { height: 32px; display: flex; align-items: center; gap: 5px; }
.stack.tall button { height: 33px; }

/* Address row */
.navbar {
  display: flex;
  padding: 8px 12px 9px 6px;
  color: #000;
}
.nav { width: 46px; display: flex; align-items: center; justify-content: center; color: #6e6e6e; }
.fwd { color: #d8d8d8; }
.recent { width: 22px; }
.up { width: 38px; }
.address {
  flex: 1;
  height: 34px;
  display: flex;
  align-items: center;
  padding-left: 4px;
  border: 1px solid #d9d9d9;
}
.address a + .crumb + a { font-size: 18px; }
.crumb { width: 10px; height: 14px; margin: 0 11px 0 9px; color: #777; }
.drop { width: 28px; display: flex; justify-content: center; color: #6e6e6e; }
.refresh {
  width: 26px;
  align-self: stretch;
  display: flex;
  align-items: center;
  justify-content: center;
  border-left: 1px solid #d9d9d9;
}
.search {
  width: 304px;
  height: 34px;
  margin-left: 12px;
  padding: 0 12px 0 10px;
  display: flex;
  align-items: center;
  border: 1px solid #d9d9d9;
}
.search input {
  flex: 1;
  min-width: 0;
  padding: 0;
  border: 0;
  outline: 0;
  background: none;
  font: inherit;
}
.search input::placeholder { color: #6d6d6d; opacity: 1; }

/* Folder tree */
.content { flex: 1; min-height: 0; display: flex; }
.tree { width: 208px; padding-top: 25px; overflow: hidden; }
.tree > ul > li { margin-bottom: 12px; }
.tree a {
  height: 36px;
  display: flex;
  align-items: center;
  gap: 5px;
  padding-left: 36px;
  white-space: nowrap;
}
.tree ul ul a { padding-left: 48px; }
.tree span { flex: 1; overflow: hidden; }
.tree .pinned { width: 16px; height: 16px; margin-right: 4px; color: #8d98a3; }
.tree .current { background: #d9d9d9; }
.onedrive { color: #0c6cc6; }
.scrollbar {
  width: 25px;
  margin: 0 3px 0 1px;
  display: flex;
  flex-direction: column;
  background: #f0f0f0;
  color: #505050;
}
.scrollbar button { height: 26px; display: flex; align-items: center; justify-content: center; }
.thumb { flex: 35; background: #cdcdcd; }
.rest { flex: 1; }

/* File list */
.files { flex: 1; border-left: 1px solid #f0f0f0; }
table { width: 100%; table-layout: fixed; border-spacing: 0; }
td, th { padding: 0; font-weight: 400; text-align: left; }
.c-pad { width: 23px; }
.c-name { width: 438px; }
.c-date { width: 203px; }
.c-type { width: 203px; }
.c-size { width: 129px; }
.c-gap { width: 6px; }
thead th { height: 46px; vertical-align: top; color: #44546e; }
thead button {
  width: 100%;
  height: 42px;
  padding-left: 9px;
  border-right: 1px solid #e5e5e5;
  text-align: left;
}
thead .sorted { position: relative; padding-left: 5px; }
.sorted svg { position: absolute; left: 210px; top: 0; width: 13px; height: 9px; color: #555; }
.section th { height: 44px; }
.section div { display: flex; align-items: center; gap: 12px; padding: 0 11px 0 13px; }
.section button { display: flex; align-items: center; gap: 7px; color: #1e3287; }
.section svg { width: 14px; height: 10px; color: #6e6e6e; }
.section i { flex: 1; height: 2px; background: #e2e2e2; }
tbody td { height: 32px; border: solid transparent; border-width: 1px 0; color: #6d6d6d; }
tbody td:nth-child(2) { display: flex; align-items: center; gap: 6px; padding-left: 6px; color: #000; }
tbody td:nth-child(3), tbody td:nth-child(4) { padding-left: 9px; }
tbody td:nth-child(3) { font-size: 18px; }
tbody td:nth-child(5) { padding-right: 6px; text-align: right; }
.selected td:not(:first-child) { background: #cce8ff; border-color: #99d1ff; }
.selected td:nth-child(2) { border-left: 1px solid #99d1ff; padding-left: 5px; }
.selected td:nth-child(5) { border-right: 1px solid #99d1ff; padding-right: 5px; }

/* Status bar */
.status { height: 35px; display: flex; align-items: center; padding: 0 9px 0 22px; color: #26406b; }
.count { width: 75px; border-right: 1px solid #ececec; line-height: 18px; }
.chosen { padding-left: 17px; }
.weight { margin-left: 10px; padding-right: 17px; border-right: 1px solid #ececec; line-height: 18px; }
.mode { width: 30px; height: 35px; display: flex; align-items: center; justify-content: center; }
.mode svg { width: 22px; height: 22px; }
.on { width: 32px; background: #cce8f7; border: 1px solid #26a0da; }

/* Taskbar */
.taskbar { height: 60px; display: flex; background: #032222; color: #fff; }
.task { width: 72px; display: flex; align-items: center; justify-content: center; }
.app { width: 73px; margin-left: 2px; }
.app svg { width: 32px; height: 32px; }
.edge { margin-left: 5px; padding-right: 2px; color: #0078d7; }
.store svg { width: 36px; height: 36px; margin-bottom: 4px; }
.active { background: #364e4e; border-bottom: 3px solid #76b9ed; }
.tray { display: flex; align-items: center; gap: 12px; padding-right: 29px; }
.tray .people { margin-right: 20px; }
.keys svg { width: 34px; height: 20px; }
.lang { margin-left: 6px; }
.clock { width: 80px; margin-left: 11px; line-height: 28px; text-align: center; white-space: nowrap; }
.notice { position: relative; margin-left: 18px; }
.badge {
  position: absolute;
  left: 12px;
  top: 12px;
  width: 24px;
  height: 24px;
  border: 1px solid #8a9494;
  border-radius: 50%;
  background: #2b3438;
  font-size: 18px;
  font-weight: 600;
  line-height: 22px;
}
.taskbar::after { content: ""; width: 2px; margin-right: 6px; background: #7c8b8b; }
```
